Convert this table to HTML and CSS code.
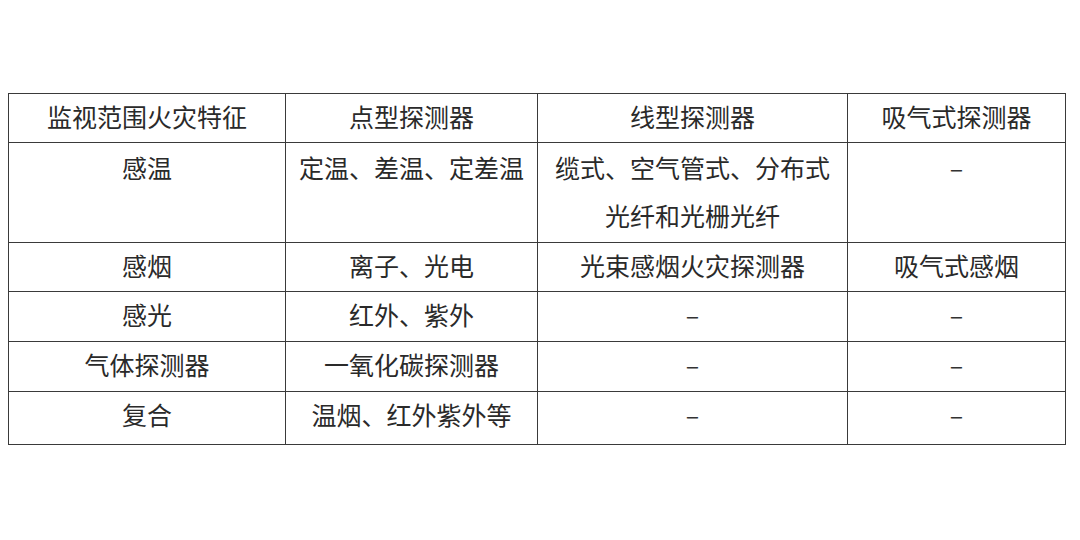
FILE: index.html
```html
<!DOCTYPE html>
<html lang="zh-CN">
<head>
<meta charset="utf-8">
<link rel="stylesheet" href="styles.css">
</head>
<body>
<table class="grid">
  <colgroup>
    <col class="c1"><col class="c2"><col class="c3"><col class="c4">
  </colgroup>
  <tr class="r-head">
    <td>监视范围火灾特征</td><td>点型探测器</td><td>线型探测器</td><td>吸气式探测器</td>
  </tr>
  <tr class="r-tall">
    <td>感温</td><td>定温、差温、定差温</td><td>缆式、空气管式、分布式<br>光纤和光栅光纤</td><td><span class="dash">–</span></td>
  </tr>
  <tr class="r-a">
    <td>感烟</td><td>离子、光电</td><td>光束感烟火灾探测器</td><td>吸气式感烟</td>
  </tr>
  <tr class="r-b">
    <td>感光</td><td>红外、紫外</td><td><span class="dash">–</span></td><td><span class="dash">–</span></td>
  </tr>
  <tr class="r-b">
    <td>气体探测器</td><td>一氧化碳探测器</td><td><span class="dash">–</span></td><td><span class="dash">–</span></td>
  </tr>
  <tr class="r-last">
    <td>复合</td><td>温烟、红外紫外等</td><td><span class="dash">–</span></td><td><span class="dash">–</span></td>
  </tr>
</table>
</body>
</html>
```
FILE: styles.css
```css
html, body {
  margin: 0;
  padding: 0;
  background: #ffffff;
}
body {
  font-family: "Noto Sans CJK SC", "Noto Sans", sans-serif;
  color: #2a2a2a;
}
.grid {
  margin: 93px 0 0 8px;
  border-collapse: collapse;
  table-layout: fixed;
  width: 1057px;
}
.c1 { width: 277px; }
.c2 { width: 252px; }
.c3 { width: 310px; }
.c4 { width: 218px; }
.grid td {
  border: 1px solid #3a3a3a;
  padding: 0;
  text-align: center;
  vertical-align: top;
  font-size: 25px;
  line-height: 45px;
  white-space: nowrap;
}
.r-head td { height: 48px; }
.r-tall td { height: 99px; line-height: 48px; }
.r-a td { height: 48px; }
.r-b td { height: 49px; }
.r-last td { height: 52px; }
.dash {
  color: #333;
}
```
